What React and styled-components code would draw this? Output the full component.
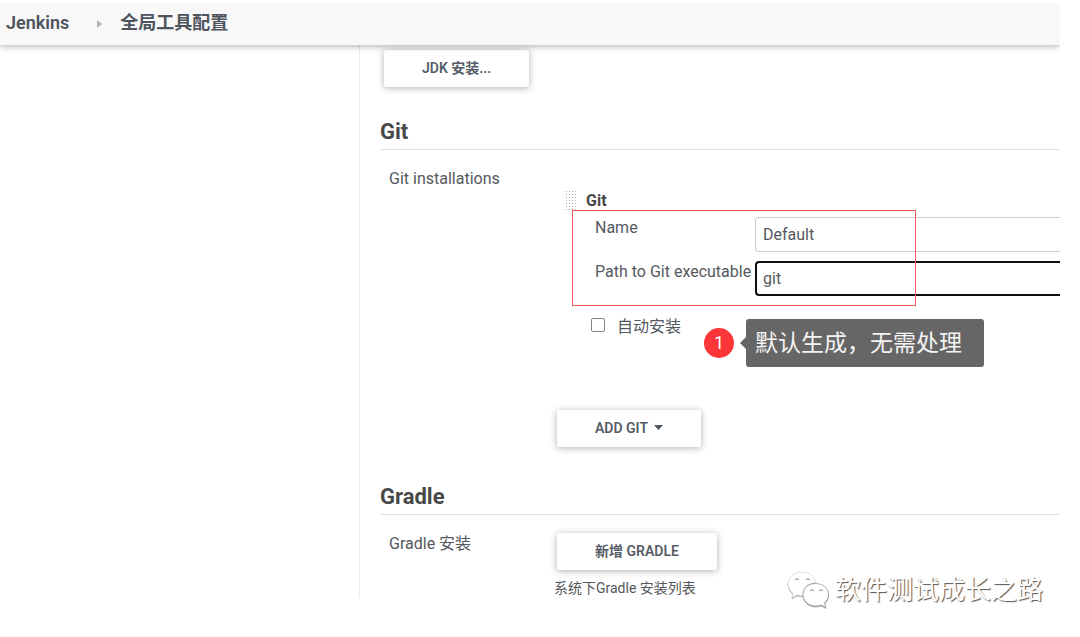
import React from "react";
import styled, { createGlobalStyle } from "styled-components";

const GlobalStyle = createGlobalStyle`
  * { box-sizing: border-box; }
  body {
    margin: 0;
    background: #fff;
    color: #55585d;
    font-family: Roboto, "Noto Sans CJK SC", sans-serif;
    font-size: 16px;
  }
`;

const Page = styled.div`
  position: relative;
  padding: 3px 20px 39px 0;
`;

const Header = styled.header`
  position: relative;
  z-index: 1;
  display: flex;
  align-items: center;
  height: 42px;
  padding: 0 6px 3px;
  background: #f8f8f8;
  box-shadow: 0 1px 7px rgba(0, 0, 0, 0.35);
  clip-path: inset(0 0 -12px 0);
`;

const Crumb = styled.a`
  color: #4d545d;
  font-size: 18px;
  font-weight: 600;
  line-height: 24px;
  text-decoration: none;
`;

const CrumbArrow = styled.svg`
  width: 5px;
  height: 8px;
  margin: 2px 18px 0 28px;
`;

const Body = styled.div`
  display: flex;
`;

const Side = styled.aside`
  flex: 0 0 360px;
  border-right: 1px solid #e9eded;
`;

const Content = styled.main`
  flex: 1;
  min-width: 0;
  padding: 5px 0 0 20px;
`;

const Button = styled.button`
  display: block;
  height: 37px;
  margin-left: ${(p) => p.$indent || 3}px;
  padding: 0 38px 1px;
  border: 0;
  border-radius: 2px;
  background: #fff;
  box-shadow: 0 1px 7px rgba(0, 0, 0, 0.32);
  color: #555c65;
  font: 600 14px/20px Roboto, "Noto Sans CJK SC", sans-serif;
  white-space: nowrap;
`;

const Caret = styled.svg`
  width: 9px;
  height: 5px;
  margin-left: 6px;
  vertical-align: 3px;
`;

const Heading = styled.h2`
  height: 36px;
  margin: ${(p) => p.$gap}px 0 0;
  border-bottom: 1px solid #e0e0e0;
  color: #484848;
  font-size: 22px;
  font-weight: 700;
  line-height: 36px;
`;

const Row = styled.div`
  display: grid;
  grid-template-columns: 165px minmax(0, 1fr);
  padding: 18px 0 0 9px;
`;

const RowLabel = styled.div`
  line-height: 22px;
`;

const ToolTitle = styled.div`
  display: flex;
  align-items: center;
  gap: 8px;
  height: 20px;
  margin: 22px 0 0 11px;
  color: #484848;
  font-weight: 700;
`;

const Grip = styled.span`
  width: 13px;
  height: 20px;
  background: radial-gradient(circle, #aaa 1px, transparent 1px) 0 0 / 3px 3px;
`;

const Fields = styled.div`
  position: relative;
  display: grid;
  gap: 9px;
  margin-left: 18px;
  padding: 7px 0 10px 23px;
`;

const Highlight = styled.div`
  position: absolute;
  z-index: 1;
  inset: 0 auto 0 0;
  width: 344px;
  border: 1px solid #f85a5a;
  pointer-events: none;
`;

const Field = styled.div`
  display: grid;
  grid-template-columns: 160px minmax(0, 1fr);
`;

const FieldLabel = styled.label`
  line-height: 21px;
  white-space: nowrap;
`;

const TextBox = styled.input`
  width: 100%;
  height: 35px;
  padding: 0 ${(p) => (p.$active ? 6 : 7)}px 1px;
  border: ${(p) => (p.$active ? "2px solid #111" : "1px solid #ccc")};
  border-right: 0;
  border-radius: 4px 0 0 4px;
  outline: 0;
  background: #fff;
  color: #55585d;
  font: 16px Roboto, sans-serif;
`;

const AutoRow = styled.div`
  position: relative;
  height: 104px;
  padding: 10px 0 0 37px;
`;

const CheckLabel = styled.label`
  display: inline-flex;
  align-items: center;
  gap: 12px;
  line-height: 22px;
`;

const CheckBox = styled.input`
  appearance: none;
  width: 14px;
  height: 14px;
  margin: 0 0 4px;
  border: 1px solid #858585;
  border-radius: 2px;
  background: #fff;
`;

const Callout = styled.div`
  position: absolute;
  top: 13px;
  left: 150px;
  display: flex;
  align-items: center;
  gap: 6px;
`;

const Badge = styled.span`
  width: 30px;
  height: 30px;
  border-radius: 50%;
  background: #fb3538;
  color: #fff;
  font-size: 18px;
  line-height: 29px;
  text-align: center;
`;

const Bubble = styled.span`
  display: flex;
  align-items: center;
  &::before {
    content: "";
    border: 6px solid transparent;
    border-left: 0;
    border-right-color: #666;
  }
`;

const BubbleText = styled.span`
  width: 238px;
  height: 48px;
  padding-left: 9px;
  border-radius: 3px;
  background: #666;
  color: #f4f4f4;
  font-size: 23px;
  line-height: 50px;
  white-space: nowrap;
`;

const Help = styled.div`
  margin-top: 9px;
  font-size: 14px;
  line-height: 19px;
`;

const Watermark = styled.div`
  position: absolute;
  right: 37px;
  bottom: 27px;
  display: flex;
  align-items: center;
  gap: 6px;
  color: #fff;
  font-size: 26px;
  line-height: 40px;
  text-shadow: 1px 1px 1px #555;
  white-space: nowrap;
`;

const WeChat = styled.svg`
  width: 42px;
  height: 38px;
  filter: drop-shadow(0 1px 0 #aaa);
`;

export default function App() {
  return (
    <>
      <GlobalStyle />
      <Page>
        <Header>
          <Crumb href="#">Jenkins</Crumb>
          <CrumbArrow viewBox="0 0 5 8" aria-hidden="true">
            <path d="M0 0 5 4 0 8z" fill="#b5b5b5" />
          </CrumbArrow>
          <Crumb href="#">全局工具配置</Crumb>
        </Header>
        <Body>
          <Side />
          <Content>
            <Button type="button" $indent={4}>JDK 安装...</Button>

            <Heading $gap={27}>Git</Heading>
            <Row>
              <RowLabel>Git installations</RowLabel>
              <div>
                <ToolTitle><Grip />Git</ToolTitle>
                <Fields>
                  <Field>
                    <FieldLabel htmlFor="name">Name</FieldLabel>
                    <TextBox id="name" defaultValue="Default" />
                  </Field>
                  <Field>
                    <FieldLabel htmlFor="path">Path to Git executable</FieldLabel>
                    <TextBox id="path" defaultValue="git" $active />
                  </Field>
                  <Highlight />
                </Fields>
                <AutoRow>
                  <CheckLabel><CheckBox type="checkbox" />自动安装</CheckLabel>
                  <Callout>
                    <Badge>1</Badge>
                    <Bubble><BubbleText>默认生成，无需处理</BubbleText></Bubble>
                  </Callout>
                </AutoRow>
                <Button type="button">
                  ADD GIT
                  <Caret viewBox="0 0 9 5" aria-hidden="true">
                    <path d="M0 0h9L4.500 5z" fill="#4d545d" />
                  </Caret>
                </Button>
              </div>
            </Row>

            <Heading $gap={32}>Gradle</Heading>
            <Row>
              <RowLabel>Gradle 安装</RowLabel>
              <div>
                <Button type="button">新增 GRADLE</Button>
                <Help>系统下Gradle 安装列表</Help>
              </div>
            </Row>
          </Content>
        </Body>
        <Watermark>
          <WeChat viewBox="0 0 42 38" aria-hidden="true">
            <path d="M15 1C7 1 1 6.500 1 13c0 4 2 7 5 9.500L5 27l5-3c2 .6 4 .8 6 .8C15 17 21 12 29 11.500 27 5 22 1 15 1z" fill="#fff" stroke="#ccc" strokeWidth=".6" />
            <path d="M28.500 12.500C21 12.500 16 17.500 16 23.500S21 35 28.500 35c2 0 4-.4 5.500-1l5 2.500-1.500-4.500c2.500-2 4-5 4-8.500 0-6-5.500-11-13-11z" fill="#fff" stroke="#999" strokeWidth=".8" />
            <path d="M8 9q2-3 4 0M19 9q2-3 4 0M23 20q2-3 4 0M32 20q2-3 4 0" fill="none" stroke="#888" />
          </WeChat>
          软件测试成长之路
        </Watermark>
      </Page>
    </>
  );
}
